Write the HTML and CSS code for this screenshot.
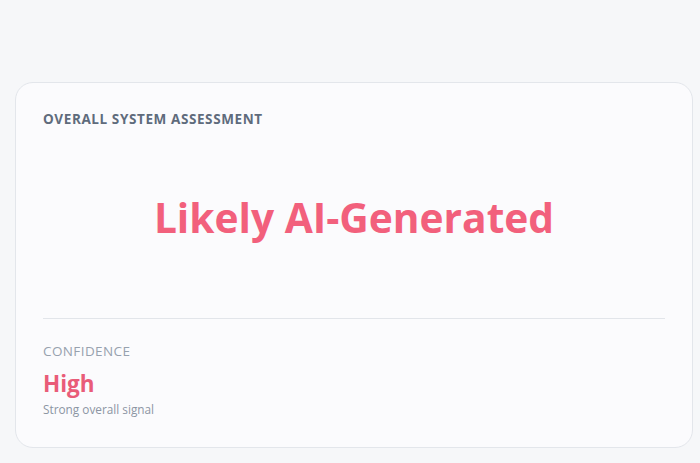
FILE: index.html
```html
<!DOCTYPE html>
<html lang="en">
<head>
  <meta charset="UTF-8">
  <title>Overall System Assessment</title>
  <link rel="stylesheet" href="styles.css">
</head>
<body>
  <!-- Verdict card -->
  <section class="card">
    <h2 class="label">Overall System Assessment</h2>

    <div class="verdict">
      <span class="verdict-text">Likely AI-Generated</span>
    </div>

    <div class="confidence">
      <div class="conf-label">Confidence</div>
      <div class="conf-value">High</div>
      <div class="conf-note">Strong overall signal</div>
    </div>
  </section>
</body>
</html>
```

FILE: styles.css
```css
* {
  margin: 0;
  padding: 0;
  box-sizing: border-box;
}

body {
  height: 100vh;
  background: #f6f7f9;
  font-family: 'Open Sans', 'Noto Sans', sans-serif;
  overflow: hidden;
  padding: 82px 8px 0 15px;
}

.card {
  width: 678px;
  height: 366px;
  background: #fbfbfd;
  border: 1px solid #e3e6eb;
  border-radius: 18px;
  padding: 27px 27px 0 27px;
  display: flex;
  flex-direction: column;
}

.label {
  font-size: 13.5px;
  font-weight: 700;
  letter-spacing: 0.6px;
  color: #5f6b7c;
  text-transform: uppercase;
  line-height: 18px;
}

.verdict {
  height: 191px;
  padding-bottom: 13px;
  display: flex;
  align-items: center;
  justify-content: center;
  border-bottom: 1px solid #e2e5ea;
}

.verdict-text {
  font-size: 40.7px;
  font-weight: 700;
  color: #f2607c;
}

.confidence {
  padding-top: 23px;
}

.conf-label {
  font-size: 13.5px;
  color: #97a1ae;
  text-transform: uppercase;
  letter-spacing: 0.4px;
  line-height: 18px;
}

.conf-value {
  font-size: 22.5px;
  font-weight: 700;
  color: #e95c79;
  line-height: 28px;
  margin-top: 10px;
}

.conf-note {
  font-size: 11.8px;
  color: #8b95a3;
  line-height: 16px;
  margin-top: 3px;
}
```
